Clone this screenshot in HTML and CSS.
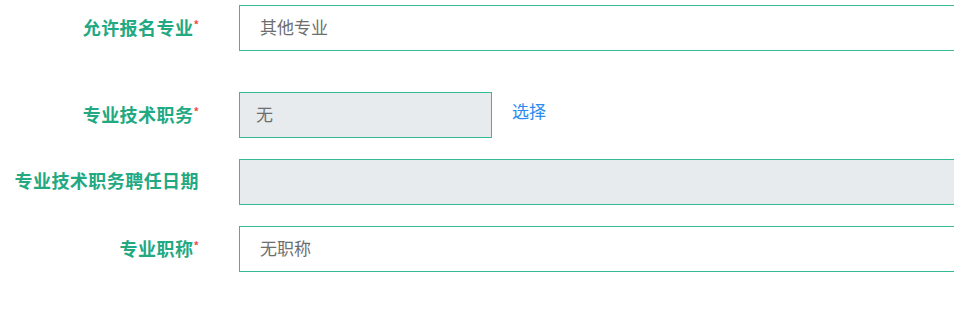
FILE: index.html
```html
<!DOCTYPE html>
<html lang="zh-CN">
<head>
<meta charset="utf-8">
<title>表单</title>
<link rel="stylesheet" href="styles.css">
</head>
<body>
<div class="form">
  <div class="form-item form-item--spaced">
    <label class="form-label">允许报名专业<span class="req">*</span></label>
    <div class="form-control">
      <input class="input input--wide" type="text" value="其他专业" readonly>
    </div>
  </div>
  <div class="form-item">
    <label class="form-label">专业技术职务<span class="req">*</span></label>
    <div class="form-control">
      <input class="input input--short input--disabled" type="text" value="无" readonly>
      <a class="link" href="#">选择</a>
    </div>
  </div>
  <div class="form-item">
    <label class="form-label">专业技术职务聘任日期</label>
    <div class="form-control">
      <input class="input input--wide input--disabled" type="text" value="" readonly>
    </div>
  </div>
  <div class="form-item">
    <label class="form-label">专业职称<span class="req">*</span></label>
    <div class="form-control">
      <input class="input input--wide" type="text" value="无职称" readonly>
    </div>
  </div>
</div>
</body>
</html>
```
FILE: styles.css
```css
html, body {
  margin: 0;
  padding: 0;
  background: #ffffff;
  overflow: hidden;
}
body {
  font-family: "Noto Sans CJK SC", "Noto Sans", sans-serif;
}
.form {
  width: 1100px;
  padding-top: 5px;
}
.form-item {
  display: flex;
  align-items: center;
  height: 46px;
  margin-bottom: 21px;
}
.form-item--spaced {
  margin-bottom: 41px;
}
.form-label {
  width: 199px;
  flex: 0 0 199px;
  margin-top: -5px;
  text-align: right;
  font-size: 18px;
  font-weight: 700;
  letter-spacing: 0.45px;
  color: #22a982;
  line-height: 24px;
  white-space: nowrap;
}
.req {
  color: #f04d4d;
  font-size: 11px;
  font-weight: 700;
  vertical-align: 6px;
  letter-spacing: 0;
}
.form-control {
  margin-left: 40px;
  display: flex;
  align-items: center;
  height: 46px;
}
.input {
  box-sizing: border-box;
  height: 46px;
  border: 1px solid #34bb96;
  border-radius: 0;
  background: #ffffff;
  padding: 0 20px 3px;
  font-family: "Noto Sans CJK SC", "Noto Sans", sans-serif;
  font-size: 17px;
  color: #6e6e6e;
  outline: none;
  margin: 0;
}
.input--wide {
  width: 780px;
}
.input--short {
  width: 253px;
  padding-left: 16px;
}
.input--disabled {
  background: #e8ebee;
}
.link {
  margin-left: 20px;
  margin-top: -8px;
  font-size: 17px;
  color: #2d8cf0;
  text-decoration: none;
  line-height: 24px;
}
```
